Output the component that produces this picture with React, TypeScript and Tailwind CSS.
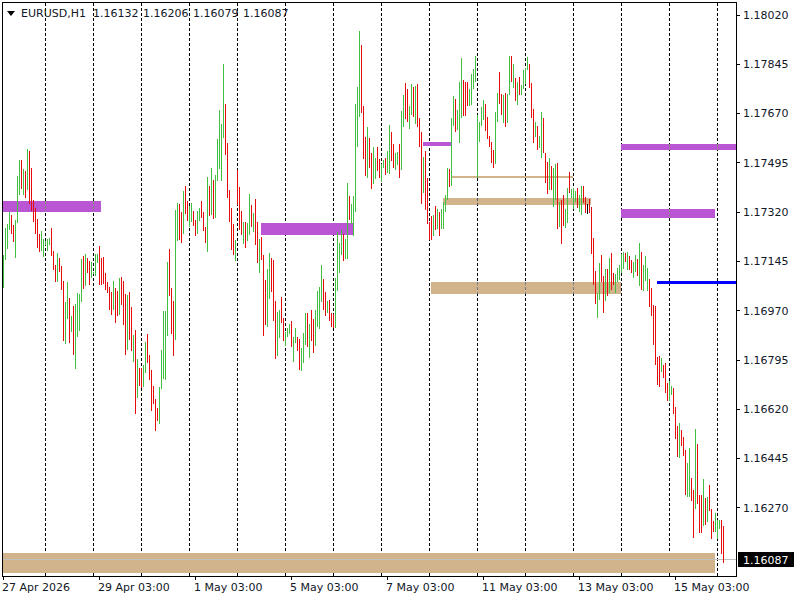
import React from 'react';

// one entry per hour, left to right, 2px apart starting at x=3: colour, top y, bottom y
const barData =
  'g255-288 g228-260 g224-249 g212-230 r215-234 r225-242 g220-258 g176-223 g160-195 r160-189 g169-195 r171-198 g149-190 r151-204 r168-211 r200-222 r208-234 r219-248 r234-252 g231-251 g239-257 ' +
  'g241-245 g239-251 g238-245 r228-256 r251-270 r265-282 g253-282 r258-272 r266-290 r281-341 g302-344 g282-319 r298-343 g316-332 r306-355 g304-369 g293-337 g294-331 g259-302 r256-289 g254-286 r258-273 r261-285 g262-278 ' +
  'g272-274 g254-276 g254-263 r246-285 r258-285 r257-284 r273-290 r282-293 r287-310 r292-315 g281-310 r288-323 r291-316 g278-315 r277-305 r281-325 r294-355 g295-350 r292-340 r307-351 g335-362 r330-414 g359-398 r368-386 ' +
  'r368-388 g365-387 g342-373 r334-363 r355-380 r370-411 r386-404 r399-431 r408-421 g387-424 g350-389 g311-379 g311-380 g262-336 r249-296 r288-334 r301-356 g210-340 g203-241 r204-240 r212-243 g191-234 r186-214 r201-221 ' +
  'g206-227 g203-222 r211-226 r220-236 g211-234 g208-221 r201-218 r212-231 r227-243 g177-252 r186-216 g168-215 r180-219 g175-218 g139-181 g110-169 g124-181 g64-138 r104-155 r143-198 r190-222 r208-250 r224-255 g240-261 ' +
  'r170-205 r187-230 r211-235 g222-244 r222-248 g223-241 g194-235 r205-227 g213-232 r199-245 r222-263 g239-273 r237-260 r255-336 r280-325 g269-327 g253-299 r258-292 r260-321 r301-359 g312-356 g310-338 r297-323 r318-341 ' +
  'g332-346 g328-337 g324-334 r321-347 g337-362 g328-343 r337-351 r339-370 g348-371 g333-363 g313-345 r313-347 g324-358 r310-341 r319-353 g310-346 g291-327 g287-329 g265-302 r279-310 r292-316 g301-313 r300-321 r313-327 ' +
  'r314-328 g278-328 g232-291 g243-273 g230-255 r234-261 g239-259 g183-259 r196-220 g204-224 g196-236 g104-212 g87-147 g31-117 r45-113 r106-159 r137-176 g127-178 r138-168 r153-189 g147-184 g158-179 r147-171 r159-178 ' +
  'g164-182 g160-168 r158-175 g151-173 g125-174 r132-161 r144-168 g153-170 g152-165 r144-178 g111-170 g95-127 r83-119 r89-122 g106-129 g84-115 r87-117 g86-124 r84-127 r118-147 r132-204 g157-193 r151-210 r178-224 ' +
  'r222-240 r216-240 g215-236 r206-230 g209-229 r212-236 g209-229 g202-229 g195-212 g168-200 r169-187 g118-186 g96-126 r99-132 g110-130 g82-143 g58-118 r80-116 r82-116 r82-106 g89-106 g74-105 g69-89 g56-82 ' +
  'g115-178 g122-142 g107-126 g100-120 r104-131 r117-139 r136-147 r142-163 r150-168 g112-164 g93-122 r72-104 r94-115 g95-123 r93-127 g94-123 g56-95 r56-82 g64-88 r78-101 g82-105 r77-95 g85-95 g70-89 ' +
  'g68-84 g57-70 r64-88 r83-118 r109-143 g122-137 r126-150 g136-148 g112-158 r118-153 r153-183 r162-194 g158-190 r166-190 g168-207 g164-200 r163-229 g202-227 r200-244 r195-226 g209-228 g188-223 r172-193 g189-198 ' +
  'g188-209 g191-202 r188-208 g195-212 g186-215 r186-203 r197-213 k204-214 r199-213 r207-254 r238-285 r271-304 g293-318 g263-300 r255-282 r276-313 g269-301 r269-296 g258-293 r253-290 r273-285 g274-293 g268-282 g265-280 ' +
  'g254-273 g252-269 r253-262 g252-270 r256-270 r260-273 g262-278 g255-272 r259-276 g243-286 r252-290 g265-291 g256-281 g268-291 r279-307 r288-316 r305-345 r306-365 r357-385 r356-387 g358-372 r365-378 r363-393 r383-401 ' +
  'g381-401 g386-395 r388-414 r407-439 r426-457 g423-458 r430-446 r437-456 r450-495 g463-497 g448-497 r478-501 r490-538 g429-509 r444-504 r495-533 r495-533 g479-526 r498-525 g497-522 r485-511 r509-539 r521-532 g513-532 ' +
  'g520-539 g520-529 r520-554 r526-563';

const barColors: Record<string, string> = { g: '#40bf40', r: '#e60c0c', k: '#000000' };

const bars = barData.split(' ').map((s, i) => {
  const [top, bottom] = s.slice(1).split('-').map(Number);
  return { x: 3 + i * 2, top, bottom, color: barColors[s[0]] };
});

const gridLines = Array.from({ length: 15 }, (_, i) => 45 + i * 48);

// tint: colour of the grid showing through the zone, if it does
const zones = [
  { x1: 3, x2: 101, y1: 201, y2: 212, color: '#ba55d3', tint: '#7f8f6f' },
  { x1: 261, x2: 354, y1: 223, y2: 235, color: '#ba55d3' },
  { x1: 423, x2: 451, y1: 142, y2: 146, color: '#ba55d3' },
  { x1: 621, x2: 736, y1: 144, y2: 150, color: '#ba55d3', tint: '#7f8f6f' },
  { x1: 621, x2: 715, y1: 209, y2: 218, color: '#ba55d3', tint: '#7f8f6f' },
  { x1: 431, x2: 621, y1: 282, y2: 294, color: '#d2b48c', tint: '#6f7d8c' },
  { x1: 443, x2: 591, y1: 198, y2: 205, color: '#d2b48c', tint: '#4f5f73' },
  { x1: 451, x2: 573, y1: 176, y2: 178, color: '#d2b48c' },
  { x1: 3, x2: 715, y1: 553, y2: 573, color: '#d2b48c' },
];

const prices = ['1.18020', '1.17845', '1.17670', '1.17495', '1.17320', '1.17145', '1.16970', '1.16795', '1.16620', '1.16445', '1.16270'];
const times = ['27 Apr 2026', '29 Apr 03:00', '1 May 03:00', '5 May 03:00', '7 May 03:00', '11 May 03:00', '13 May 03:00', '15 May 03:00'];

const font = 'font-["DejaVu_Sans",sans-serif] text-[11px] text-[#111827]';

function Chart() {
  return (
    <svg viewBox="3 3 733 573" width={733} height={573} shapeRendering="crispEdges" className="block">
      {gridLines.map((x) => (
        <line key={x} x1={x + 0.5} x2={x + 0.5} y1={3} y2={576} stroke="#000" strokeDasharray="3 2" />
      ))}
      {zones.map((z) => (
        <rect key={`${z.x1}-${z.y1}`} x={z.x1} y={z.y1} width={z.x2 - z.x1} height={z.y2 - z.y1} fill={z.color} />
      ))}
      {zones.map((z) =>
        z.tint
          ? gridLines
              .filter((x) => x > z.x1 && x < z.x2)
              .map((x) => (
                <line key={`${x}-${z.y1}`} x1={x + 0.5} x2={x + 0.5} y1={z.y1} y2={z.y2} stroke={z.tint} strokeDasharray="3 2" />
              ))
          : null
      )}
      <rect x={657} y={281} width={79} height={3} fill="#0000ff" />
      <rect x={3} y={559} width={733} height={1} fill="#c0c0c0" />
      {bars.map((b) => (
        <rect key={b.x} x={b.x} y={b.top} width={1} height={b.bottom - b.top} fill={b.color} />
      ))}
    </svg>
  );
}

export default function App() {
  return (
    <div className={`w-[800px] h-[600px] bg-white overflow-hidden pt-[2px] pl-[2px] ${font}`}>
      <div className="flex">
        <div className="relative w-[735px] h-[575px] shrink-0 border border-black">
          <Chart />
          <div className="absolute left-[4px] top-[4px] flex items-center whitespace-nowrap leading-[13px]">
            <span className="w-0 h-0 border-x-[4px] border-x-transparent border-t-[5px] border-t-black mr-[6px]" />
            <span className="w-[72px]">EURUSD,H1</span>
            <span className="w-[50px]">1.16132</span>
            <span className="w-[50px]">1.16206</span>
            <span className="w-[50px]">1.16079</span>
            <span>1.16087</span>
          </div>
        </div>
        <div className="relative flex-1">
          <div className="flex flex-col justify-between h-[509px] mt-[5px]">
            {prices.map((p) => (
              <div key={p} className="flex items-center h-[16px] whitespace-nowrap">
                <span className="w-[3px] h-px bg-black mr-[3px]" />
                <span className="mt-[2px]">{p}</span>
              </div>
            ))}
          </div>
          <div className="absolute left-px top-[550px] w-[56px] h-[15px] bg-black text-white flex items-center pl-[5px] pt-px leading-none">
            1.16087
          </div>
        </div>
      </div>
      <div className="flex pl-px">
        {times.map((t) => (
          <div key={t} className="w-[96px] shrink-0 flex flex-col whitespace-nowrap">
            <span className="w-px h-[3px] bg-black" />
            <span className="-ml-px leading-[16px]">{t}</span>
          </div>
        ))}
      </div>
    </div>
  );
}
